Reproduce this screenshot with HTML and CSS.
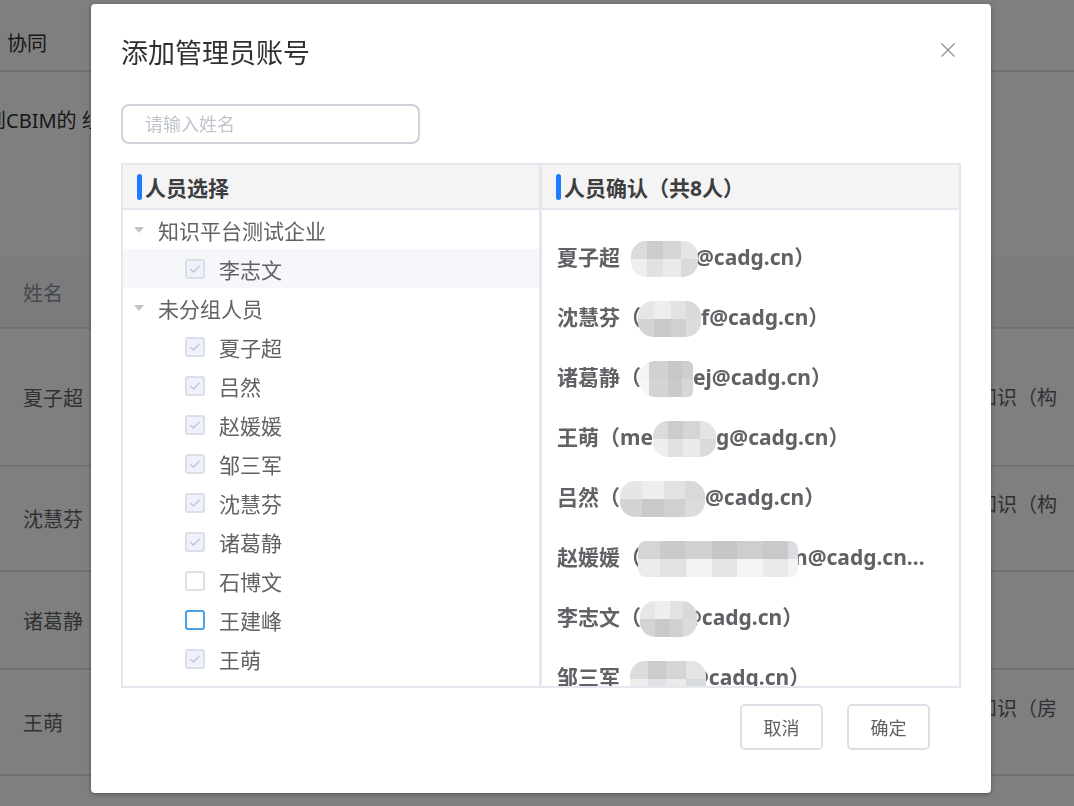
FILE: index.html
```html
<!DOCTYPE html>
<html lang="zh-CN">
<head>
<meta charset="utf-8">
<title>管理员设置</title>
<link rel="stylesheet" href="styles.css">
</head>
<body>
<div class="page">
  <header class="topbar">
    <nav class="nav"><a class="nav-link">协同</a></nav>
  </header>
  <p class="intro">加入到CBIM的 组织知识平台，成为平台管理员</p>
  <section class="table">
    <div class="row row-head">
      <div class="cell-name">姓名</div>
      <div class="cell-lib">所属</div>
    </div>
    <div class="row row-1">
      <div class="cell-name">夏子超</div>
      <div class="cell-lib">企业知识（构件）</div>
    </div>
    <div class="row row-2">
      <div class="cell-name">沈慧芬</div>
      <div class="cell-lib">企业知识（构件）<br>库</div>
    </div>
    <div class="row row-3">
      <div class="cell-name">诸葛静</div>
      <div class="cell-lib">无</div>
    </div>
    <div class="row row-4">
      <div class="cell-name">王萌</div>
      <div class="cell-lib">企业知识（房建）<br>库</div>
    </div>
    <div class="row row-5">
      <div class="cell-name"></div>
      <div class="cell-lib"></div>
    </div>
  </section>
</div>

<div class="mask"></div>

<div class="dialog" role="dialog">
  <div class="dialog-head">
    <h2 class="dialog-title">添加管理员账号</h2>
    <button class="dialog-close" type="button" aria-label="关闭">
      <svg viewBox="0 0 16 16" width="16" height="16"><path d="M1.5 1.5 L14.5 14.5 M14.5 1.5 L1.5 14.5" stroke="#909399" stroke-width="1.4" fill="none"/></svg>
    </button>
  </div>

  <input class="search" type="text" placeholder="请输入姓名">

  <div class="transfer">
    <div class="panel panel-select">
      <div class="panel-head"><span class="panel-bar"></span>人员选择</div>
      <div class="tree">
        <div class="tree-node tree-group"><svg class="caret" viewBox="0 0 10 6" width="10" height="6"><polygon points="0,0 10,0 5,6" fill="#c0c4cc"/></svg>知识平台测试企业</div>
        <div class="tree-node tree-leaf is-hover"><span class="check is-checked"><svg viewBox="0 0 16 16" width="16" height="16"><path d="M3.2 8 L6.4 11 L12.8 4.6" fill="none" stroke="#c0c4cc" stroke-width="1.3"/></svg></span>李志文</div>
        <div class="tree-node tree-group"><svg class="caret" viewBox="0 0 10 6" width="10" height="6"><polygon points="0,0 10,0 5,6" fill="#c0c4cc"/></svg>未分组人员</div>
        <div class="tree-node tree-leaf"><span class="check is-checked"><svg viewBox="0 0 16 16" width="16" height="16"><path d="M3.2 8 L6.4 11 L12.8 4.6" fill="none" stroke="#c0c4cc" stroke-width="1.3"/></svg></span>夏子超</div>
        <div class="tree-node tree-leaf"><span class="check is-checked"><svg viewBox="0 0 16 16" width="16" height="16"><path d="M3.2 8 L6.4 11 L12.8 4.6" fill="none" stroke="#c0c4cc" stroke-width="1.3"/></svg></span>吕然</div>
        <div class="tree-node tree-leaf"><span class="check is-checked"><svg viewBox="0 0 16 16" width="16" height="16"><path d="M3.2 8 L6.4 11 L12.8 4.6" fill="none" stroke="#c0c4cc" stroke-width="1.3"/></svg></span>赵媛媛</div>
        <div class="tree-node tree-leaf"><span class="check is-checked"><svg viewBox="0 0 16 16" width="16" height="16"><path d="M3.2 8 L6.4 11 L12.8 4.6" fill="none" stroke="#c0c4cc" stroke-width="1.3"/></svg></span>邹三军</div>
        <div class="tree-node tree-leaf"><span class="check is-checked"><svg viewBox="0 0 16 16" width="16" height="16"><path d="M3.2 8 L6.4 11 L12.8 4.6" fill="none" stroke="#c0c4cc" stroke-width="1.3"/></svg></span>沈慧芬</div>
        <div class="tree-node tree-leaf"><span class="check is-checked"><svg viewBox="0 0 16 16" width="16" height="16"><path d="M3.2 8 L6.4 11 L12.8 4.6" fill="none" stroke="#c0c4cc" stroke-width="1.3"/></svg></span>诸葛静</div>
        <div class="tree-node tree-leaf"><span class="check"></span>石博文</div>
        <div class="tree-node tree-leaf"><span class="check is-focus"></span>王建峰</div>
        <div class="tree-node tree-leaf"><span class="check is-checked"><svg viewBox="0 0 16 16" width="16" height="16"><path d="M3.2 8 L6.4 11 L12.8 4.6" fill="none" stroke="#c0c4cc" stroke-width="1.3"/></svg></span>王萌</div>
      </div>
    </div>

    <div class="panel panel-confirm">
      <div class="panel-head"><span class="panel-bar"></span>人员确认（共8人）</div>
      <ul class="confirm-list">
        <li class="confirm-item">夏子超（<span class="mosaic" style="--w:67px;--a:10px;--b:3px"></span>@cadg.cn）</li>
        <li class="confirm-item">沈慧芬（<span class="mosaic mosaic-alt" style="--w:63px;--a:3px;--b:0px"></span>f@cadg.cn）</li>
        <li class="confirm-item">诸葛静（<span class="mosaic mosaic-soft" style="--w:55px;--a:3px;--b:0px"></span>ej@cadg.cn）</li>
        <li class="confirm-item">王萌（me<span class="mosaic" style="--w:63px;--a:0px;--b:0px"></span>g@cadg.cn）</li>
        <li class="confirm-item">吕然（<span class="mosaic mosaic-alt" style="--w:85px;--a:0px;--b:0px"></span>@cadg.cn）</li>
        <li class="confirm-item">赵媛媛（<span class="mosaic mosaic-long" style="--w:160px;--a:3px;--b:4px"></span>n@cadg.cn）</li>
        <li class="confirm-item">李志文（<span class="mosaic mosaic-alt" style="--w:57px;--a:1px;--b:14px"></span>@cadg.cn）</li>
        <li class="confirm-item">邹三军（<span class="mosaic" style="--w:76px;--a:11px;--b:16px"></span>@cadg.cn）</li>
      </ul>
    </div>
  </div>

  <div class="dialog-foot">
    <button class="btn" type="button">取消</button>
    <button class="btn" type="button">确定</button>
  </div>
</div>
</body>
</html>
```
FILE: styles.css
```css
* { box-sizing: border-box; }

html, body { margin: 0; }

body {
  width: 1074px;
  height: 806px;
  overflow: hidden;
  font-family: "Noto Sans", "Noto Sans CJK SC", sans-serif;
  color: #303133;
  background: #fff;
}

/* ---------- page behind the modal ---------- */
.page { width: 1074px; }

.topbar {
  height: 72px;
  border-bottom: 2px solid #dfe2e8;
}

.nav { display: flex; padding: 31px 0 0 7px; }

.nav-link {
  font-size: 20px;
  line-height: 26px;
  color: #303133;
  text-decoration: none;
}

.intro {
  margin: 35px 0 0 -54px;
  font-size: 20px;
  line-height: 28px;
  color: #303133;
  white-space: nowrap;
}

.table { margin-top: 122px; }

.row {
  display: flex;
  align-items: center;
  border-bottom: 2px solid #dfe2e8;
  font-size: 20px;
  color: #606266;
}

.row-head { height: 72px; background: #f5f7fa; color: #909399; }
.row-1 { height: 138px; }
.row-2 { height: 105px; }
.row-3 { height: 98px; }
.row-4 { height: 106px; }
.row-5 { height: 32px; border-bottom: 0; }

.cell-name { flex: 1; padding: 3px 0 0 23px; line-height: 28px; }

.cell-lib {
  width: 120px;
  margin-right: 17px;
  padding-top: 1px;
  line-height: 28px;
  overflow: hidden;
  white-space: nowrap;
}

/* ---------- modal ---------- */
.mask {
  position: fixed;
  inset: 0;
  background: rgba(0, 0, 0, 0.5);
}

.dialog {
  position: absolute;
  left: 91px;
  top: 4px;
  width: 900px;
  height: 789px;
  padding: 31px 30px 0;
  display: flex;
  flex-direction: column;
  background: #fff;
  border-radius: 4px;
  box-shadow: 0 1px 4px rgba(0, 0, 0, 0.35);
}

.dialog-head {
  display: flex;
  justify-content: space-between;
  align-items: flex-start;
}

.dialog-title {
  margin: 0;
  font-size: 27px;
  line-height: 36px;
  font-weight: 400;
  color: #303133;
}

.dialog-close {
  width: 16px;
  height: 16px;
  margin: 7px 5px 0 0;
  padding: 0;
  border: 0;
  background: none;
  display: flex;
}

.search {
  width: 299px;
  height: 40px;
  margin-top: 33px;
  padding: 0 20px 0 22px;
  border: 2px solid #cfd2d8;
  border-radius: 8px;
  font-family: inherit;
  font-size: 18px;
  color: #606266;
  outline: none;
}

.search::placeholder { color: #c0c4cc; }

.transfer {
  display: flex;
  height: 525px;
  margin-top: 19px;
}

.panel {
  display: flex;
  flex-direction: column;
  overflow: hidden;
  border: 2px solid #e4e7ed;
}

.panel-select { width: 420px; }
.panel-confirm { width: 420px; border-left-width: 1px; }

.panel-head {
  flex: none;
  height: 45px;
  display: flex;
  align-items: center;
  padding-left: 14px;
  background: #f4f4f5;
  border-bottom: 2px solid #e4e7ed;
  font-size: 21px;
  font-weight: 700;
  color: #3d3d3f;
}

.panel-bar {
  width: 5px;
  height: 26px;
  margin-right: 3px;
  border-radius: 3px;
  background: #1a7dff;
}

/* tree */
.tree-node {
  height: 39px;
  display: flex;
  align-items: center;
  font-size: 21px;
  color: #606266;
}

.tree-group { padding-left: 11px; }
.tree-group .caret { margin-right: 14px; }

.tree-leaf { padding-left: 62px; }
.tree-leaf.is-hover { background: #f5f7fa; }

.check {
  width: 20px;
  height: 20px;
  margin-right: 14px;
  display: flex;
  align-items: center;
  justify-content: center;
  border: 2px solid #dcdfe6;
  border-radius: 3px;
  background: #fff;
}

.check.is-checked { background: #edf2fc; }
.check.is-focus { border-color: #4a9fe8; }

/* selected people */
.confirm-list {
  margin: 0;
  padding: 17px 33px 0 15px;
  list-style: none;
}

.confirm-item {
  height: 60px;
  line-height: 60px;
  font-size: 21px;
  font-weight: 700;
  color: #606266;
  white-space: nowrap;
  overflow: hidden;
  text-overflow: ellipsis;
}

/* pixelated privacy patch over the e-mail user name */
.mosaic {
  position: relative;
  display: inline-block;
  width: var(--w);
  height: 36px;
  margin-left: calc(var(--a) * -1);
  margin-right: calc(var(--b) * -1);
  vertical-align: middle;
  border-radius: 15px;
  background:
    linear-gradient(90deg, #dadbdd 0 24%, #cbccce 24% 48%, #d4d5d7 48% 74%, #e3e4e5 74%) top / 100% 50% no-repeat,
    linear-gradient(90deg, #eeeeef 0 24%, #e0e1e2 24% 48%, #eaeaeb 48% 74%, #d9dadc 74%) bottom / 100% 50% no-repeat;
}

.mosaic-alt {
  background:
    linear-gradient(90deg, #e6e6e7 0 26%, #eeeeef 26% 52%, #e2e2e4 52% 76%, #d8d9db 76%) top / 100% 50% no-repeat,
    linear-gradient(90deg, #d3d4d6 0 26%, #c8c9cb 26% 52%, #cfd0d2 52% 76%, #dcdcde 76%) bottom / 100% 50% no-repeat;
}

.mosaic-soft {
  border-radius: 20px 6px 6px 20px;
  background:
    linear-gradient(90deg, #f4f4f5 0 20%, #d0d1d3 20% 55%, #c6c7c9 55% 80%, #cdced0 80%) top / 100% 50% no-repeat,
    linear-gradient(90deg, #f6f6f6 0 20%, #d2d3d5 20% 55%, #c9cacc 55% 80%, #d6d7d9 80%) bottom / 100% 50% no-repeat;
}

.mosaic-long {
  border-radius: 8px;
  background:
    linear-gradient(90deg, #d4d5d7 0 14%, #c9cacc 14% 30%, #d0d1d3 30% 46%, #c5c6c8 46% 62%, #cdced0 62% 78%, #c8c9cb 78% 94%, #dcdde0 94%) top / 100% 50% no-repeat,
    linear-gradient(90deg, #ebebec 0 14%, #e1e2e3 14% 30%, #f2f2f3 30% 46%, #e6e6e7 46% 62%, #f4f4f4 62% 78%, #e9e9ea 78% 94%, #f3f3f3 94%) bottom / 100% 50% no-repeat;
}

/* footer */
.dialog-foot {
  display: flex;
  justify-content: flex-end;
  gap: 24px;
  margin-top: 16px;
  padding-right: 31px;
}

.btn {
  width: 83px;
  height: 46px;
  padding: 0;
  border: 2px solid #dcdfe6;
  border-radius: 5px;
  background: #fff;
  font-family: inherit;
  font-size: 18px;
  color: #606266;
}
```
